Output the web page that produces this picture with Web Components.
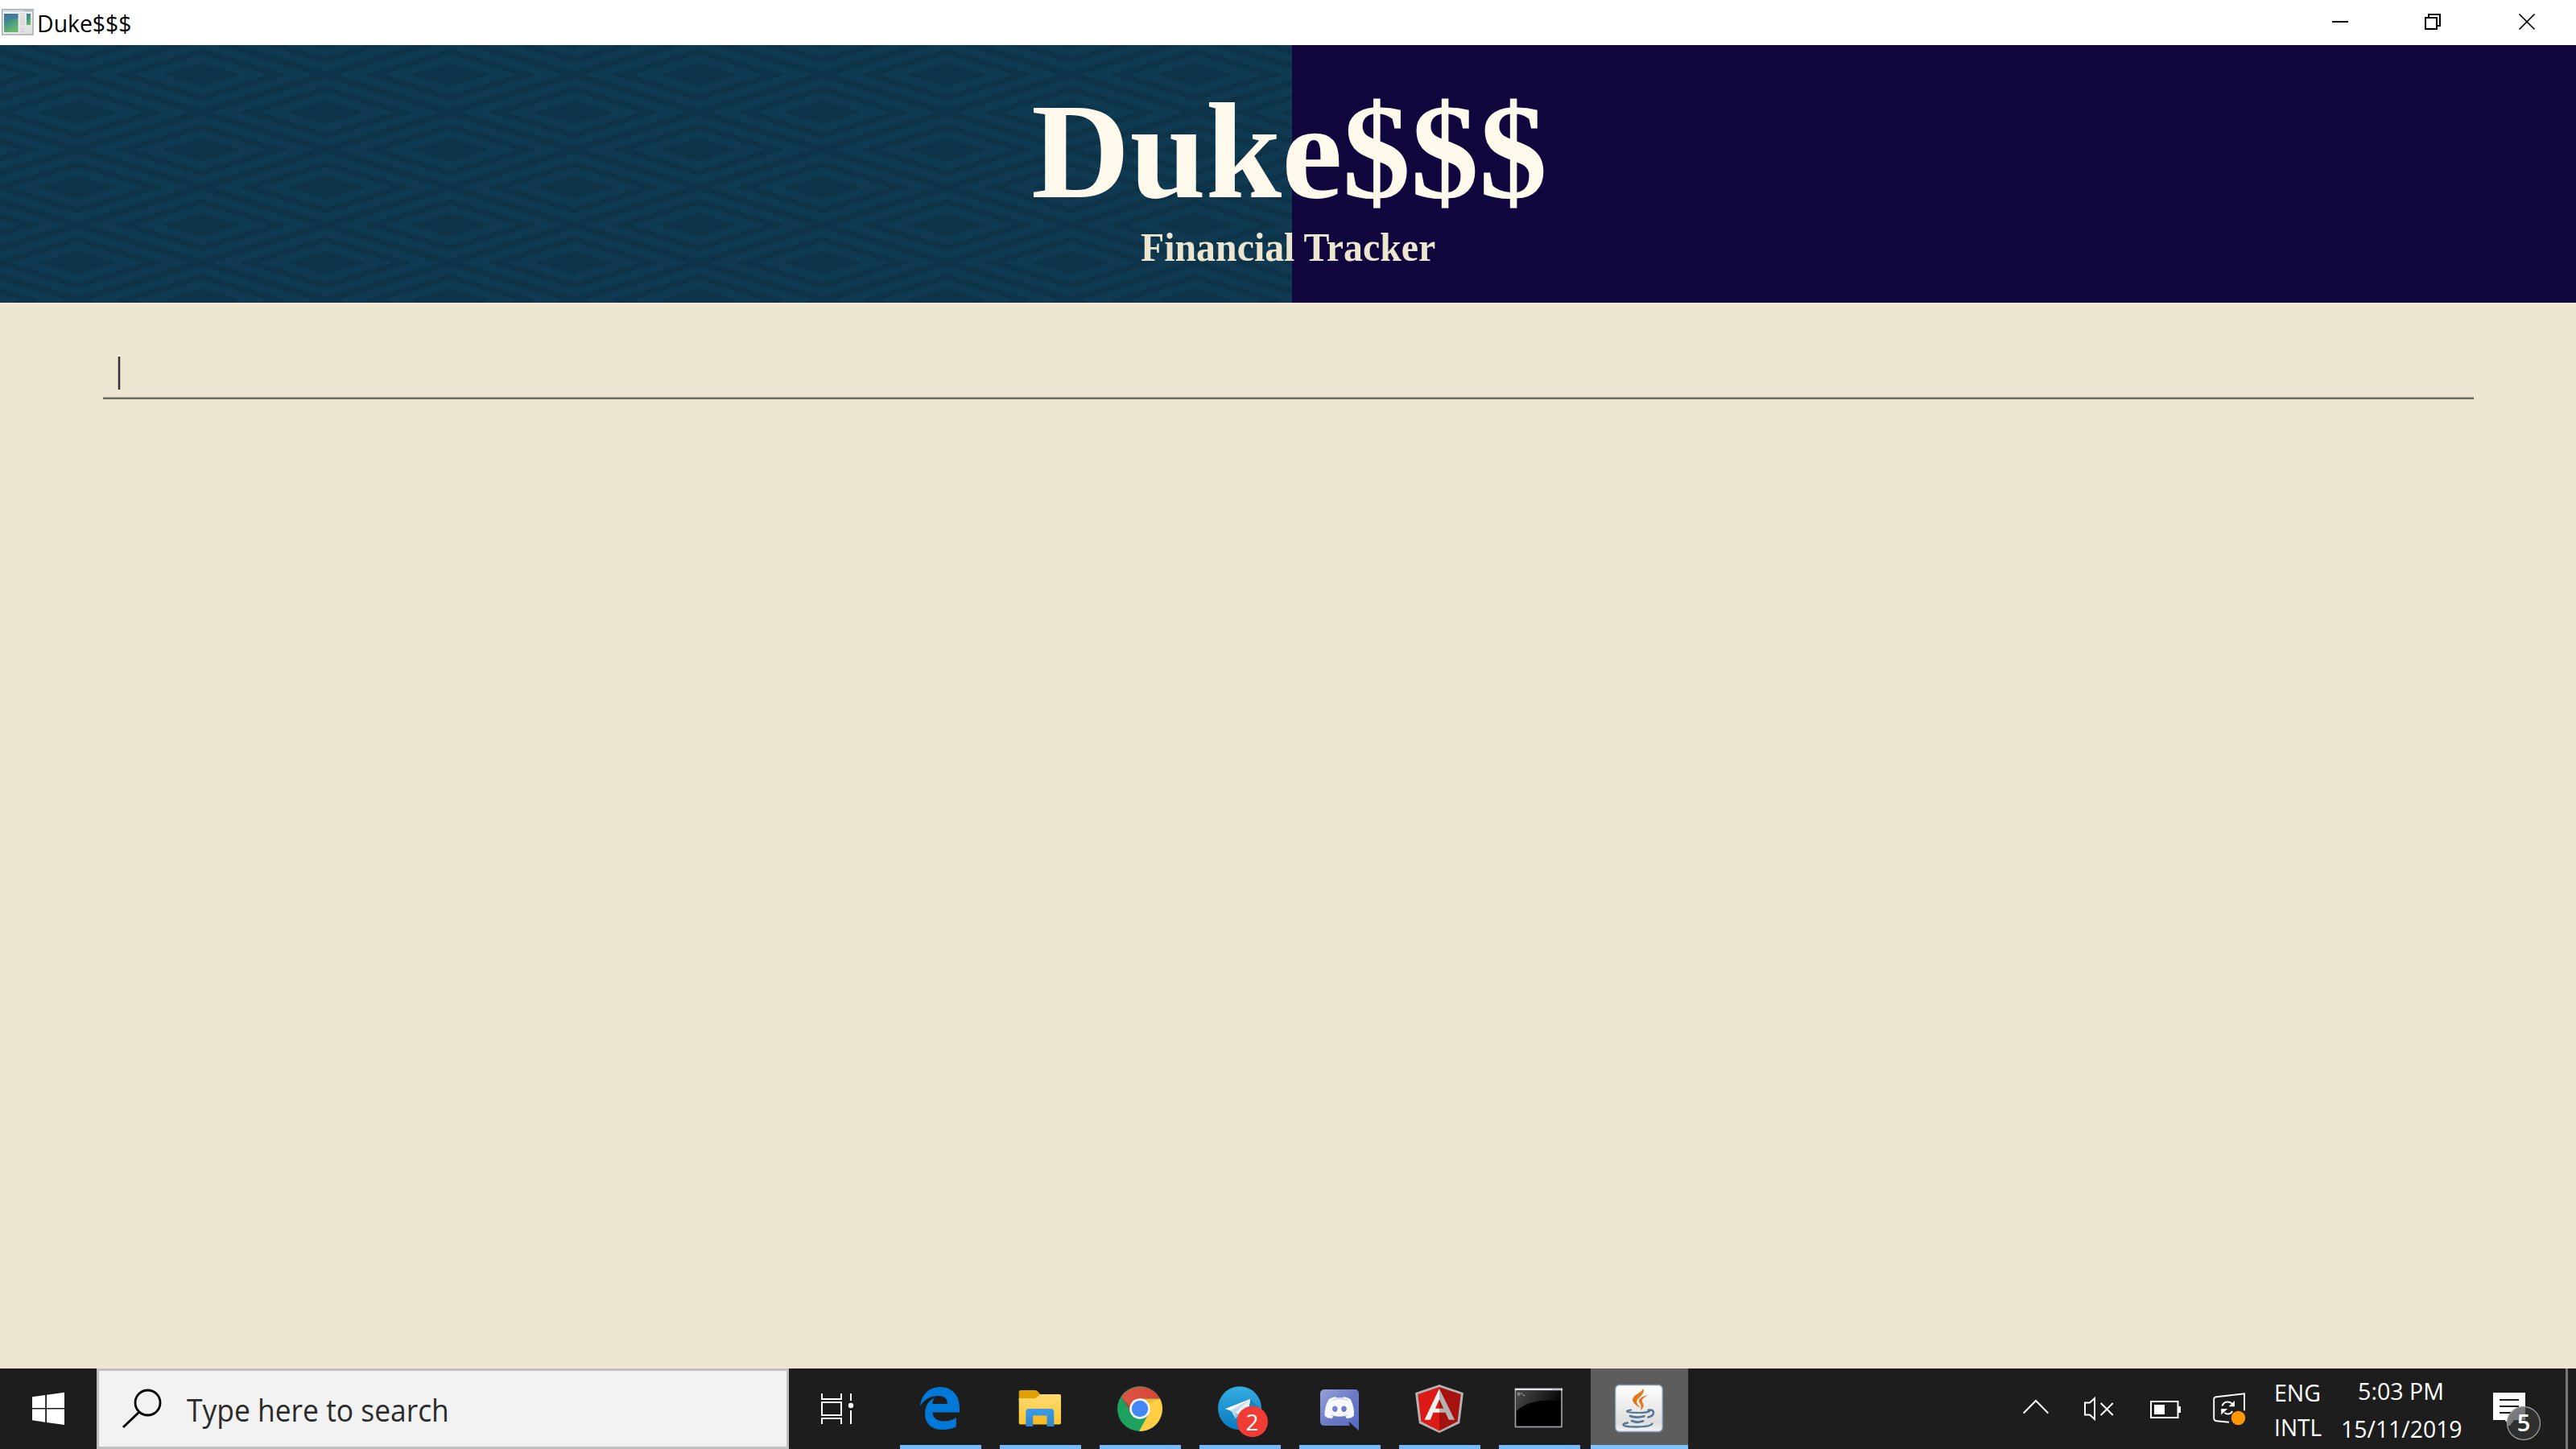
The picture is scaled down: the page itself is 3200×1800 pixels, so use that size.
<!DOCTYPE html>
<html lang="en">
<head>
<meta charset="utf-8">
<title>Duke$$$</title>
<style>
html,body{margin:0;padding:0;width:3200px;height:1800px;overflow:hidden;background:#ede6d1}
</style>
</head>
<body>
<duke-desktop></duke-desktop>

<template id="t-desktop">
<style>
:host{display:flex;flex-direction:column;width:3200px;height:1800px;font-family:"Open Sans","Noto Sans",sans-serif}
</style>
<window-bar><fit-text w="114" size="29">Duke$$$</fit-text></window-bar>
<app-header>
  <fit-text slot="title" w="635" size="170" weight="700" family="Liberation Serif">Duke$$$</fit-text>
  <fit-text slot="subtitle" w="367" size="50" weight="700" family="Liberation Serif">Financial Tracker</fit-text>
</app-header>
<command-pane></command-pane>
<task-bar></task-bar>
</template>

<template id="t-window">
<style>
:host{display:flex;height:56px;background:#fff;color:#000;flex:none}
.icon{width:48px;height:56px;flex:none}
::slotted(fit-text){margin:14px 0 0 0}
.controls{margin-left:auto;width:345px;height:56px}
</style>
<svg class="icon" viewBox="0 0 48 56">
  <defs><linearGradient id="wg" x1="0" y1="0" x2=".4" y2="1"><stop offset="0" stop-color="#3f6f9c"/><stop offset=".5" stop-color="#429584"/><stop offset="1" stop-color="#67b66f"/></linearGradient>
  <linearGradient id="wf" x1="0" y1="0" x2="1" y2="1"><stop offset="0" stop-color="#f8f8f8"/><stop offset="1" stop-color="#dedede"/></linearGradient></defs>
  <rect x="2.7" y="11.7" width="38.3" height="31.3" fill="url(#wf)" stroke="#a3a7ab" stroke-width="1.4"/>
  <path d="M4 13.5H29" stroke="#c7d3dd" stroke-width="2"/><path d="M29 13.5H40" stroke="#a9b1b9" stroke-width="1.5"/>
  <rect x="5" y="17" width="17.5" height="23" fill="url(#wg)"/><path d="M5 27Q11 23 22.5 22V17H5Z" fill="#3f74a6" opacity=".6"/>
  <path d="M25 17h6M25 20h6M25 22.500h6M25 25h6M25 27.500h6M25 30h6M25 36h6M25 39h6" stroke="#c8c8c8"/>
  <rect x="33" y="17" width="5" height="14" fill="url(#wg)"/>
</svg>
<slot></slot>
<svg class="controls" viewBox="2855 0 345 56" fill="none" stroke="#000">
  <path d="M2897 27h20" stroke-width="2"/>
  <path d="M3013 22h14v14h-14zM3017 22v-4h14v14h-4" stroke-width="2"/>
  <path d="M3129.500 17.500l19 19m0-19l-19 19" stroke-width="1.7"/>
</svg>
</template>

<template id="t-header">
<style>
:host{display:grid;height:320px;flex:none;grid-template-columns:1605px 1fr}
.art{grid-area:1/1;width:1605px;height:320px}
.solid{grid-area:1/2;background:#10053d}
.copy{grid-area:1/1/2/3;z-index:1;display:flex;flex-direction:column;align-items:center;padding-top:47px}
::slotted([slot=title]){color:#fff9ec}
::slotted([slot=subtitle]){color:#ece5cf;margin-top:9px}
</style>
<svg class="art" viewBox="0 56 1605 320">
  <defs>
    <g id="dm"><path d="M-140 0L0-42.300 140 0 0 42.300Z" fill="#103a51"/><path d="M-108 0L0-32.500 108 0 0 32.500Z" fill="#0d3348"/><path d="M-82 0L0-25 82 0 0 25Z" fill="#103a51"/><path d="M-49 0L0-15 49 0 0 15Z" fill="#0d3348"/></g>
    <pattern id="pt" patternUnits="userSpaceOnUse" x="96.100" y="46.100" width="308.600" height="93.330">
      <rect width="309" height="94" fill="#0d3348"/>
      <use href="#dm" x="154.300" y="46.670"/><use href="#dm"/><use href="#dm" x="308.600"/><use href="#dm" y="93.330"/><use href="#dm" x="308.600" y="93.330"/>
    </pattern>
  </defs>
  <rect y="56" width="1605" height="320" fill="url(#pt)"/>
</svg>
<div class="solid"></div>
<div class="copy"><slot name="title"></slot><slot name="subtitle"></slot></div>
</template>

<template id="t-pane">
<style>
:host{display:block;flex:1;background:linear-gradient(#f5e8d4,#ede6d1 5px);padding:0 127px 0 128px}
.field{height:118px;border-bottom:2px solid #696a65;box-shadow:inset 0 -1px #aca997;display:flex;align-items:flex-start;padding-left:18px}
.caret{width:2px;height:41px;margin-top:67px;background:#333;border:solid #bdb8a7;border-width:0 1px}
</style>
<div class="field"><div class="caret"></div></div>
</template>

<template id="t-cell">
<style>
:host{display:flex;flex-direction:column;width:121px;height:100px;margin-right:3px;flex:none}
:host([active]){background:#5d5d5d}
.pic{height:95px}
.line{height:5px;margin:0 10px;background:#76b9ff}
:host([active]) .line{margin:0;background:#83c3ff}
</style>
<div class="pic"><slot></slot></div><div class="line"></div>
</template>

<template id="t-taskbar">
<style>
:host{display:flex;height:100px;flex:none;background:#1d1d1d;color:#fff}
svg{display:block;flex:none;height:100px}
task-cell svg{width:121px;height:95px}
.search{box-sizing:border-box;width:860px;height:100px;border:3px solid #c0c0c0;background:#f2f2f2;display:flex;color:#2b2b2b;flex:none}
.search svg{width:110px;height:94px}
.search fit-text{margin:30px 0 0 -1px}
.tray{margin-left:auto;display:flex}
.lang{width:83px;display:flex;flex-direction:column;padding-top:15px;gap:14px}
.clock{width:148px;display:flex;flex-direction:column;padding-top:13px;gap:18px}
.clock .time{margin-left:20px}
</style>
<svg width="120" viewBox="0 1700 120 100" fill="#fff"><path d="M40 1735.200l16.200-2.300v16H40zM58 1732.700l22-3v19.200H58zM40 1750.500h16.200v16.200L40 1764.300zM58 1750.500h22V1770l-22-3z"/></svg>
<div class="search">
  <svg viewBox="123 1703 110 94" fill="none" stroke="#000" stroke-width="2.800"><circle cx="183.500" cy="1742.500" r="15.500"/><path d="M173 1754l-20 19" stroke-width="3"/></svg>
  <fit-text w="323" size="37.500">Type here to search</fit-text>
</div>
<svg width="128" viewBox="980 1700 128 100" fill="none" stroke="#fff" stroke-width="2">
  <path d="M1021 1731v7h24v-7M1021 1742h24v16h-24zM1021 1769v-7h24v7M1057 1731v9M1057 1752v17"/><circle cx="1057" cy="1746" r="3.200" fill="#fff" stroke="none"/>
</svg>

<task-cell><svg viewBox="1108 1700 121 95">
  <path fill="#0078d7" d="M1143 1746.500C1145 1732 1154 1723 1168 1723C1183 1723 1192 1734 1192 1748V1754.500H1158.500C1159 1762 1164 1765.500 1173 1765.500C1179 1765.500 1184 1763.500 1187.800 1761V1772.300C1183 1775 1177 1776 1171 1776C1156.500 1776 1149 1768 1149 1756C1149 1747 1153 1740 1161 1736.500C1159 1739 1158.500 1741.500 1158.300 1744H1177C1177 1737.500 1173 1734 1166 1734C1156 1734 1148 1738.500 1143 1746.500Z"/>
</svg></task-cell>

<task-cell><svg viewBox="1232 1700 121 95">
  <defs><linearGradient id="fo" x2="0" y2="1"><stop stop-color="#ffda73"/><stop offset="1" stop-color="#fcc62e"/></linearGradient><linearGradient id="fb" x2="0" y2="1"><stop stop-color="#3b9be8"/><stop offset="1" stop-color="#2f86cb"/></linearGradient></defs>
  <path fill="#dfa000" d="M1265.700 1729q0-2 2-2h18q2 0 3 1l3.500 4v8h-26.500z"/>
  <path fill="url(#fo)" d="M1265.700 1737h19q2 0 3-1l3-3q1-1 3-1h22.300q2 0 2 2v33.500q0 2-2 2h-48.300q-2 0-2-2z"/>
  <path fill="#f3b71f" d="M1283 1769v-10h17.500v10z" opacity=".65"/>
  <path fill="url(#fb)" d="M1274.300 1772v-18q0-4 4-4h27q4 0 4 4v18h-8.800v-13.500h-17.300v13.500z"/>
</svg></task-cell>

<task-cell><svg viewBox="1356 1700 121 95">
  <defs><linearGradient id="cr" x2="1"><stop stop-color="#df5548"/><stop offset="1" stop-color="#d64335"/></linearGradient></defs>
  <circle cx="1416" cy="1750" r="28" fill="#1da15f"/>
  <path fill="#ffce44" d="M1416 1737.500H1441A28 28 0 0 1 1415 1778L1427 1756Z"/>
  <path fill="url(#cr)" d="M1393 1735.500A28 28 0 0 1 1441 1737.500H1416L1405 1756Z"/>
  <path d="M1441 1737.500h-25l10 6z" fill="#d29e2c" opacity=".4"/>
  <path d="M1393 1735.500l12 20-2-9z" fill="#0c6e41" opacity=".5"/>
  <circle cx="1416" cy="1750" r="12.800" fill="#f3f6fb"/><circle cx="1416" cy="1750" r="10.200" fill="#4688f3"/>
</svg></task-cell>

<task-cell><svg viewBox="1480 1700 121 95">
  <defs><linearGradient id="tg" x2="0" y2="1"><stop stop-color="#36aee2"/><stop offset="1" stop-color="#0779bd"/></linearGradient></defs>
  <circle cx="1540" cy="1749.300" r="27" fill="url(#tg)"/>
  <path d="M1553 1738l14 14v6l-16 2z" fill="#147aad" opacity=".7"/>
  <path fill="#fff" d="M1522 1750L1553.300 1737.700L1549 1763L1537 1756Z"/><path fill="#c5dbea" d="M1529 1752l24-14-18 17v7.500z"/><path fill="#e8f1f8" d="M1535 1755l18-17-4 25z"/><path fill="#9cc4dd" d="M1533.500 1762.500l1.500-7.500 5 3.500z"/>
  <circle cx="1555.700" cy="1766" r="19.300" fill="#f03c35"/>
  <text x="1555.500" y="1777" font-size="28" text-anchor="middle" fill="#fff">2</text>
</svg></task-cell>

<task-cell><svg viewBox="1604 1700 121 95">
  <defs><linearGradient id="dc" x2="1" y2="1"><stop stop-color="#95a2d8"/><stop offset=".5" stop-color="#6c7bc6"/><stop offset="1" stop-color="#5269bf"/></linearGradient></defs>
  <path fill="url(#dc)" d="M1645.500 1726h37q5.500 0 5.500 5.500v45.800l-12.300-11.300 1.100 5h-31.300q-5.500 0-5.500-5.500v-34q0-5.500 5.500-5.500z"/>
  <path fill="#fff" opacity=".95" fill-rule="evenodd" d="M1651 1738q5-3 8.500-2.800l.8 1.300q4-.5 8 0l.7-1.300q4-.2 8.500 2.800 5 9 4.500 20.500-3 3.500-9 3.500l-2-2.700q2-.6 3.500-1.800-10 4.500-21.500 0 1.500 1.200 3.500 1.800l-2 2.700q-6 0-9-3.500-.3-11.500 5.500-20.500zM1658.300 1746.500a3.300 3.700 0 1 0 .01 0zM1669.500 1746.500a3.300 3.700 0 1 0 .01 0z"/>
  <path d="M1655 1739.500q9-4 19 0" fill="none" stroke="#7584c9" stroke-width="1.200" opacity=".4"/>
</svg></task-cell>

<task-cell><svg viewBox="1728 1700 121 95">
  <path fill="#b3b3b3" d="M1788 1720l30 10.300-4.800 37.700-25.200 12-25.200-12-4.800-37.700z"/>
  <path fill="#dd1b16" d="M1788 1723l-26.700 9 4 33.800 22.700 11.700z"/><path fill="#a6120d" d="M1788 1723l26.700 9-4 33.800-22.700 11.700z"/>
  <path fill="#f2f2f2" d="M1788 1725l-18.500 38.700h7.300l3.700-9h7.500v-5h-5l5-11.500z"/><path fill="#b3b3b3" d="M1788 1725v13.200l5.200 11.500h-5.200v5h7.700l4 9h7.300z"/>
</svg></task-cell>

<task-cell><svg viewBox="1852 1700 121 95">
  <defs><linearGradient id="cm" x2="1" y2=".2"><stop stop-color="#4b4b4b"/><stop offset="1" stop-color="#090909"/></linearGradient></defs>
  <rect x="1882.500" y="1725.500" width="57.500" height="47" fill="#000" stroke="#9fa3a7" stroke-width="1.700"/>
  <path fill="url(#cm)" d="M1883.500 1728h55.500v12q-39-3-55.500 13z"/><path stroke="#e1e3e8" stroke-width="2.500" d="M1882 1726h59"/><path stroke="#9da1a8" d="M1928 1726h11"/>
  <path d="M1885.500 1730.500v2.500h2.500v-2.500zM1889.500 1730l2.500 3M1892 1733.500h2.500" fill="none" stroke="#b8b8b8" stroke-width=".8"/>
</svg></task-cell>

<task-cell active><svg viewBox="1976 1700 121 95">
  <defs><linearGradient id="jv" x2="0" y2="1"><stop stop-color="#fff"/><stop offset=".8" stop-color="#dedede"/><stop offset="1" stop-color="#f4f4f4"/></linearGradient></defs>
  <rect x="2006.700" y="1720.500" width="58.500" height="58" rx="5" fill="url(#jv)" stroke="#86a0b5" stroke-width="1.300"/>
  <g fill="#e4761f"><path d="M2041.500 1725q2 5-5 11-6 5-1 10l2 3q-9-5-9.500-10 0-4 7-8 5-3 6.500-6z"/><path d="M2047 1733q-9 2-11 6-1 2 1 4 3 4 .5 9.500 6-5 3.500-9-3-4 1-7z"/></g>
  <g fill="none" stroke="#517596" stroke-linecap="round"><path d="M2026 1751.500q-5 .5-5 2 0 1.500 15 1.500 10 0 13-2" stroke-width="2.200"/><path d="M2047.500 1751.700q7-1 6.500 3.500-.7 4-6.500 5.300" stroke-width="2.500"/><path d="M2025 1759q7 3 17.500.3M2027 1765q7 3 14 .3" stroke-width="2.600"/><path d="M2022 1767.500q-6 .8-5.500 2.500 1 2.500 15 2.500 19 0 21-4" stroke-width="2.300"/></g>
</svg></task-cell>

<div class="tray">
  <svg width="327" viewBox="2500 1700 327 100" fill="none" stroke="#fff" stroke-width="2">
    <path d="M2513.700 1755.500l15.300-15.500 15.300 15.500"/>
    <path d="M2590 1742.500h6l6-5.500v26l-6-5.500h-6zM2609.700 1743l15 15m0-15l-15 15"/>
    <path d="M2672 1741h33.500v20H2672z"/><path d="M2676 1745h13v12h-13zM2706 1747h3v8h-3z" fill="#fff" stroke="none"/>
    <path d="M2769 1766.800l-15-1.500q-3.800-.3-3.800-3.500V1738q0-2.500 3-2.800L2788 1731.200v21" stroke-width="1.900"/>
    <path d="M2760.500 1746.500q1.500-5 7-5 3.500 0 5.500 2.500M2773 1753q-1.500 3.500-5.500 3.500-2.500 0-4-1.500" stroke-width="2"/><path d="M2776 1740v7.200h-7.500zM2759.200 1750h8l-8 7.500z" fill="#fff" stroke="none"/>
    <circle cx="2780.500" cy="1761.500" r="8.700" fill="#ff9800" stroke="none"/>
  </svg>
  <div class="lang"><fit-text w="54" size="29">ENG</fit-text><fit-text w="57" size="29">INTL</fit-text></div>
  <div class="clock"><fit-text class="time" w="104" size="29">5:03 PM</fit-text><fit-text w="148" size="29">15/11/2019</fit-text></div>
  <svg width="142" viewBox="3058 1700 142 100">
    <path fill="#fff" d="M3097 1730h40v34h-18.500l-.5 7-6.500-7H3097z"/>
    <path d="M3105 1739h24M3105 1747h24M3105 1755h24" stroke="#1d1d1d" stroke-width="2"/>
    <clipPath id="nb"><circle cx="3135" cy="1768" r="20.500"/></clipPath>
    <circle cx="3135" cy="1768" r="20.500" fill="#303030"/>
    <path clip-path="url(#nb)" fill="#7a7a7a" d="M3100 1730h37v34h-14l-5 7h-18z"/>
    <circle cx="3135" cy="1768" r="20.500" fill="none" stroke="#9a9a9a" stroke-width="1.300"/>
    <text x="3135" y="1777.700" font-size="29" font-weight="600" text-anchor="middle" fill="#fff">5</text>
    <path d="M3188.500 1700v100" stroke="#777" stroke-width="3"/>
  </svg>
</div>
</template>

<script>
const define = (name, templateId) => customElements.define(name, class extends HTMLElement {
  constructor() {
    super();
    this.attachShadow({mode: 'open'}).append(document.getElementById(templateId).content.cloneNode(true));
  }
});

// A single line of text whose inked width is set by the "w" attribute.
customElements.define('fit-text', class extends HTMLElement {
  connectedCallback() {
    if (this.shadowRoot) return;
    const width = +this.getAttribute('w'), size = +this.getAttribute('size');
    const weight = this.getAttribute('weight') || '400';
    const family = this.getAttribute('family') || 'Open Sans';
    const font = `${weight} ${size}px "${family}"`;
    const root = this.attachShadow({mode: 'open'});
    root.innerHTML = `<style>:host{display:block;width:${width}px;height:${size}px;flex:none}
      span{display:inline-block;white-space:pre;transform-origin:0 0;font:${weight} ${size}px/1 "${family}",sans-serif}</style><span><slot></slot></span>`;
    const ctx = document.createElement('canvas').getContext('2d');
    ctx.font = font;
    const m = ctx.measureText(this.textContent);
    const scale = width / (m.actualBoundingBoxLeft + m.actualBoundingBoxRight);
    root.querySelector('span').style.transform = `translateX(${m.actualBoundingBoxLeft * scale}px) scaleX(${scale})`;
  }
});

define('window-bar', 't-window');
define('app-header', 't-header');
define('command-pane', 't-pane');
define('task-cell', 't-cell');
define('task-bar', 't-taskbar');
define('duke-desktop', 't-desktop');
</script>
</body>
</html>
